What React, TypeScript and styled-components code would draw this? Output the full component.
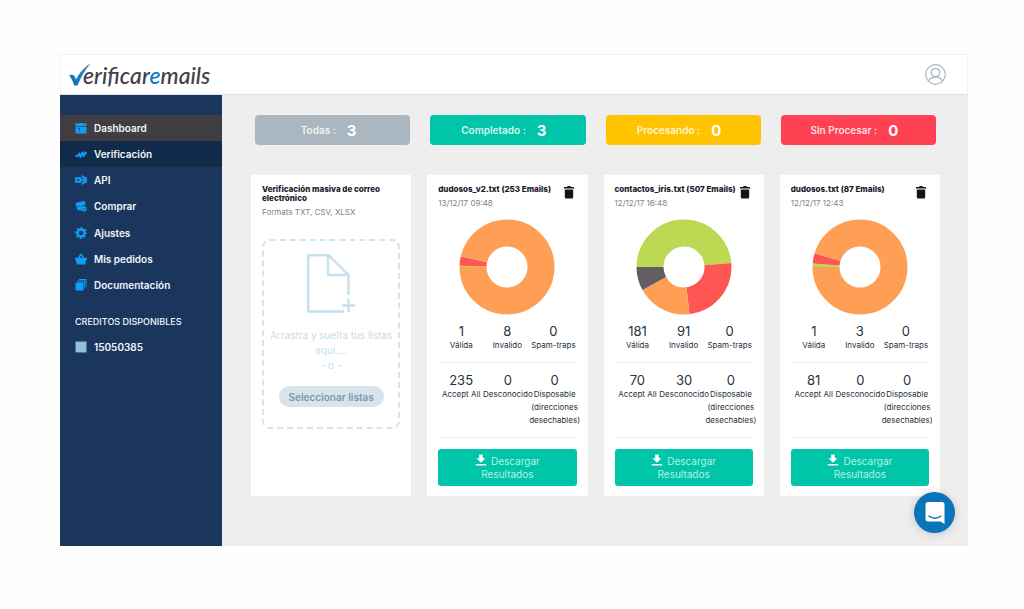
import React from "react";
import styled, { createGlobalStyle } from "styled-components";

const GlobalStyle = createGlobalStyle`
  *, *::before, *::after { box-sizing: border-box; }
  body {
    margin: 0;
    background: #fefefe;
    color: #253240;
    font-family: Inter, "Liberation Sans", sans-serif;
    font-size: 8px;
  }
  h2, p, ul, dl, dd { margin: 0; padding: 0; }
  ul { list-style: none; }
  button { font-family: inherit; cursor: pointer; border: 0; padding: 0; }
`;

const Page = styled.div`
  min-height: 100vh;
  padding: 54px 56px 63px 60px;
  display: flex;
`;

const Shell = styled.div`
  position: relative;
  flex: 1;
  min-width: 0;
  display: flex;
  flex-direction: column;
`;

const Header = styled.header`
  display: flex;
  align-items: center;
  justify-content: space-between;
  height: 41px;
  padding: 0 21px 0 8px;
  background: #fff;
  border: 1px solid #f1f1f1;
  border-bottom-color: #dbe2ea;
`;

const Brand = styled.a`
  display: flex;
  align-items: center;
  color: #414046;
  text-decoration: none;
  font-family: Lato, "Open Sans", sans-serif;
  font-style: italic;
  font-weight: 500;
  font-size: 23px;
  line-height: 24px;

  svg { margin-right: -8px; }
`;

const BrandAccent = styled.span`
  color: #0d7ac4;
`;

const IconButton = styled.button`
  display: flex;
  flex: none;
  background: none;
  color: ${(p) => p.color};
`;

const Body = styled.div`
  flex: 1;
  display: flex;
`;

const Sidebar = styled.aside`
  flex: none;
  width: 162px;
  padding-top: 20px;
  background: #1b365d;
`;

const NavList = styled.ul`
  display: grid;
  grid-auto-rows: 1fr;
  min-height: 183px;
`;

const NavLink = styled.a<{ $bg?: string }>`
  display: flex;
  align-items: center;
  gap: 7px;
  height: 100%;
  padding-left: 15px;
  background: ${(p) => p.$bg ?? "transparent"};
  color: #f1f5fa;
  font-size: 10px;
  font-weight: 600;
  text-decoration: none;

  svg { color: #0c9ef8; }
`;

const SideTitle = styled.h2`
  padding: 18px 0 0 15px;
  color: #f1f5fa;
  font-size: 9px;
  line-height: 12px;
  font-weight: 500;
`;

const Credits = styled.p`
  display: flex;
  align-items: center;
  gap: 7px;
  padding: 12px 0 0 15px;
  color: #f1f5fa;
  font-size: 10px;
  line-height: 14px;
  font-weight: 600;
`;

const Main = styled.main`
  flex: 1;
  min-width: 0;
  padding: 20px 28px 50px 29px;
  background: #eee;
`;

const Filters = styled.div`
  display: grid;
  grid-template-columns: repeat(4, 1fr);
  gap: 20px;
  padding: 0 4px;
`;

const Filter = styled.button<{ $bg: string }>`
  display: flex;
  align-items: center;
  justify-content: center;
  gap: 11px;
  height: 30px;
  padding-right: 8px;
  border-radius: 4px;
  background: ${(p) => p.$bg};
  color: rgba(255, 255, 255, 0.85);
  font-size: 10px;
  font-weight: 600;

  strong {
    color: #fff;
    font-size: 15px;
    font-weight: 700;
  }
`;

const Cards = styled.div`
  display: grid;
  grid-template-columns: repeat(4, 1fr);
  gap: 16px;
  margin-top: 30px;
`;

const Card = styled.section`
  display: flex;
  flex-direction: column;
  min-width: 0;
  padding: 10px 11px;
  background: #fff;
`;

const CardHead = styled.div`
  display: flex;
  justify-content: space-between;
  height: 34px;
  padding-right: 2px;
`;

const Title = styled.h2<{ $wrap?: boolean }>`
  color: #17202b;
  font-size: 8px;
  line-height: 9px;
  font-weight: 800;
  white-space: ${(p) => (p.$wrap ? "normal" : "nowrap")};
`;

const Sub = styled.p`
  margin-top: 4px;
  color: #7d8288;
  font-size: 8px;
  line-height: 10px;
`;

const DropZone = styled.div`
  display: flex;
  flex-direction: column;
  align-items: center;
  margin-top: 22px;
  height: 190px;
  padding-top: 12px;
  border: 2px dashed #d3e4f0;
  border-radius: 8px;
  color: #c6deec;
  font-size: 10px;
  line-height: 15px;
  text-align: center;

  p { margin-top: 15px; }
`;

const PickButton = styled.button`
  margin-top: 13px;
  height: 21px;
  padding: 0 10px;
  border-radius: 11px;
  background: #d7e4ec;
  color: #7f98a8;
  font-size: 10px;
  font-weight: 600;
`;

const Chart = styled.svg`
  display: block;
  align-self: center;
  width: 96px;
  height: 96px;
`;

const Stats = styled.dl<{ $columns: string }>`
  display: grid;
  grid-template-columns: ${(p) => p.$columns};
  border-bottom: 1px solid #ececec;
`;

const TopStats = styled(Stats)`
  padding: 8px 0 10px;
`;

const BottomStats = styled(Stats)`
  padding: 9px 0 10px 1px;
`;

const Stat = styled.div`
  display: flex;
  flex-direction: column-reverse;
  justify-content: flex-end;
  align-items: center;
  min-width: 0;

  dt {
    font-size: 8px;
    line-height: 13px;
    text-align: center;
    white-space: pre;
  }
  dd {
    font-size: 13px;
    line-height: 16px;
  }
`;

const Download = styled.button`
  margin-top: 11px;
  min-height: 37px;
  padding: 0 30px;
  border-radius: 3px;
  background: #00c5a9;
  color: #b4f1e6;
  font-size: 10px;
  line-height: 13px;

  svg {
    margin-right: 4px;
    vertical-align: -1px;
    color: #fff;
  }
`;

const ChatButton = styled.button`
  position: absolute;
  right: 13px;
  bottom: 13px;
  display: flex;
  align-items: center;
  justify-content: center;
  width: 41px;
  height: 41px;
  border-radius: 50%;
  background: #0a74bb;
  box-shadow: 0 1px 10px rgba(0, 0, 0, 0.18);
`;

const icons: Record<string, React.ReactNode> = {
  dashboard: (
    <>
      <path d="M.5 1h2v1h1V1h5v1h1V1h2v3.300H.5z" />
      <path d="M.5 5h11v6.500H.5z" />
      <path d="M3 6.500h1.500V8M4 9.300h.8" stroke="#1b365d" strokeWidth=".8" fill="none" />
    </>
  ),
  pulse: (
    <path
      d="M.5 8h2l1.700-2.500L5.500 9l2-4.500L8.800 8l1.400-3.500L11.500 6"
      fill="none"
      stroke="currentColor"
      strokeWidth="2"
      strokeLinejoin="round"
    />
  ),
  api: (
    <>
      <path d="M0 3.300h6.500v5.400H0zM1.600 5.300v1.400h2.800V5.300z" fillRule="evenodd" />
      <path
        d="M6 6h5M7 1.500 9.500 5M7 10.500 9.500 7M9 3l2.500 1.500v3L9 9"
        fill="none"
        stroke="currentColor"
        strokeWidth="1.700"
      />
    </>
  ),
  buy: (
    <>
      <path d="M.5 3 9.500.8l1.200 4-9 2.200z" />
      <path d="M1.500 7.300 7 6l-.8 4.500-3.700-.5z" />
      <circle cx="9" cy="8.700" r="2.700" />
      <path d="m7.700 8.700 1 1 1.700-1.800" fill="none" stroke="#1b365d" strokeWidth=".8" />
    </>
  ),
  gear: (
    <>
      <circle cx="6" cy="6" r="3.500" fill="none" stroke="currentColor" strokeWidth="2.400" />
      <circle
        cx="6"
        cy="6"
        r="5"
        fill="none"
        stroke="currentColor"
        strokeWidth="1.800"
        strokeDasharray="2.100 1.827"
        strokeDashoffset="1"
      />
    </>
  ),
  basket: (
    <>
      <path d="M0 4.800h12v2h-.7L10.300 11.500H1.700L.7 6.800H0z" />
      <path d="M2.500 5.300 5.300.8h1.400l2.800 4.500H8L6 2.500 4.200 5.300z" />
    </>
  ),
  docs: (
    <>
      <path d="M4 0h7.500v7.500h-1V1H4z" />
      <path d="M2.300 1.600h7.600v7.800H9V2.500H2.300z" />
      <path d="M2 3.200h6.500v8.300H.5V4.700z" />
    </>
  ),
};

function NavIcon({ name }: { name: string }) {
  return (
    <svg width="12" height="12" viewBox="0 0 12 12" fill="currentColor" aria-hidden="true">
      {icons[name]}
    </svg>
  );
}

const nav = [
  { label: "Dashboard", icon: "dashboard", bg: "#403e43" },
  { label: "Verificación", icon: "pulse", bg: "#122b4a" },
  { label: "API", icon: "api" },
  { label: "Comprar", icon: "buy" },
  { label: "Ajustes", icon: "gear" },
  { label: "Mis pedidos", icon: "basket" },
  { label: "Documentación", icon: "docs" },
];

const filters = [
  { label: "Todas :", count: 3, bg: "#abb7c0" },
  { label: "Completado :", count: 3, bg: "#00c5a9" },
  { label: "Procesando :", count: 0, bg: "#ffc400" },
  { label: "Sin Procesar :", count: 0, bg: "#ff4154" },
];

type Result = {
  name: string;
  emails: number;
  date: string;
  valid: number;
  invalid: number;
  traps: number;
  acceptAll: number;
  unknown: number;
  disposable: number;
};

const results: Result[] = [
  { name: "dudosos_v2.txt", emails: 253, date: "13/12/17 09:48", valid: 1, invalid: 8, traps: 0, acceptAll: 235, unknown: 0, disposable: 0 },
  { name: "contactos_iris.txt", emails: 507, date: "12/12/17 16:48", valid: 181, invalid: 91, traps: 0, acceptAll: 70, unknown: 30, disposable: 0 },
  { name: "dudosos.txt", emails: 87, date: "12/12/17 12:43", valid: 1, invalid: 3, traps: 0, acceptAll: 81, unknown: 0, disposable: 0 },
];

function Donut({ result }: { result: Result }) {
  const slices = [
    { value: result.valid, color: "#bdd954" },
    { value: result.invalid, color: "#ff5654" },
    { value: result.acceptAll, color: "#ff9f55" },
    { value: result.unknown, color: "#615d62" },
  ];
  const total = slices.reduce((sum, s) => sum + s.value, 0);
  let start = 0;
  return (
    <Chart viewBox="0 0 96 96" role="img" aria-label={`Resultados de ${result.name}`}>
      {slices.map((s) => {
        const share = (s.value / total) * 100;
        const offset = -start;
        start += share;
        return share > 0 ? (
          <circle
            key={s.color}
            cx="48"
            cy="48"
            r="34"
            fill="none"
            stroke={s.color}
            strokeWidth="27"
            pathLength={100}
            strokeDasharray={`${share} ${100 - share}`}
            strokeDashoffset={offset}
            transform="rotate(180 48 48)"
          />
        ) : null;
      })}
    </Chart>
  );
}

function StatItem({ label, value }: { label: string; value: number }) {
  return (
    <Stat>
      <dt>{label}</dt>
      <dd>{value}</dd>
    </Stat>
  );
}

function ResultCard({ result }: { result: Result }) {
  return (
    <Card>
      <CardHead>
        <div>
          <Title>{`${result.name} (${result.emails} Emails)`}</Title>
          <Sub>{result.date}</Sub>
        </div>
        <IconButton color="#14161c" aria-label={`Eliminar ${result.name}`}>
          <svg width="12" height="14" viewBox="0 0 12 14" fill="currentColor">
            <path d="M1 2h3l.7-1h2.600L8 2h3v1.500H1zM1.800 4.500h8.400V12q0 1.500-1.500 1.500H3.300q-1.500 0-1.500-1.500z" />
          </svg>
        </IconButton>
      </CardHead>
      <Donut result={result} />
      <TopStats $columns="repeat(3, minmax(0, 1fr))">
        <StatItem label="Válida" value={result.valid} />
        <StatItem label="Invalido" value={result.invalid} />
        <StatItem label="Spam-traps" value={result.traps} />
      </TopStats>
      <BottomStats $columns="minmax(0, 1fr) max-content minmax(0, 1fr)">
        <StatItem label="Accept All" value={result.acceptAll} />
        <StatItem label="Desconocido" value={result.unknown} />
        <StatItem label={"Disposable\n(direcciones\ndesechables)"} value={result.disposable} />
      </BottomStats>
      <Download>
        <svg width="12" height="12" viewBox="0 0 12 12" fill="currentColor" aria-hidden="true">
          <path d="M4.200.5h3.600v3.800h2.700L6 8.700 1.500 4.300h2.700zM.8 10h10.400v1.500H.8z" />
        </svg>
        Descargar Resultados
      </Download>
    </Card>
  );
}

export default function App() {
  return (
    <>
      <GlobalStyle />
      <Page>
        <Shell>
          <Header>
            <Brand href="#">
              <svg width="22" height="24" viewBox="0 0 22 24" aria-hidden="true">
                <defs>
                  <linearGradient id="check" x1="0" y1="1" x2="1" y2="0">
                    <stop offset="0" stopColor="#0b6cb8" />
                    <stop offset=".5" stopColor="#1784cc" />
                    <stop offset="1" stopColor="#5f7f9c" />
                  </linearGradient>
                </defs>
                <path d="M0 12.500c2.500-1.500 5-1 6 1.500l1 2.500C10 10.500 15 4.500 21.500.5 16 7 12 14 8.500 22.500H5C4 18.500 2.500 15 0 12.500z" fill="url(#check)" />
              </svg>
              <span>
                erificar<BrandAccent>e</BrandAccent>mails
              </span>
            </Brand>
            <IconButton color="#a9b6c3" aria-label="Mi cuenta">
              <svg width="21" height="21" viewBox="0 0 21 21" fill="none" stroke="currentColor" strokeWidth="1.200">
                <circle cx="10.500" cy="10.500" r="9.800" />
                <circle cx="10.500" cy="8.500" r="4.200" />
                <path d="M3.500 17.200c1-2.700 3.800-4 7-4s6 1.300 7 4" />
              </svg>
            </IconButton>
          </Header>
          <Body>
            <Sidebar>
              <nav aria-label="Principal">
                <NavList>
                  {nav.map((n) => (
                    <li key={n.label}>
                      <NavLink href="#" $bg={n.bg}>
                        <NavIcon name={n.icon} />
                        {n.label}
                      </NavLink>
                    </li>
                  ))}
                </NavList>
              </nav>
              <SideTitle>CREDITOS DISPONIBLES</SideTitle>
              <Credits>
                <svg width="12" height="12" viewBox="0 0 12 12" aria-hidden="true">
                  <path d="M.5.5h11v11H.5z" fill="#86b9d3" />
                  <path
                    d="M2 2.500h8M2 4.500h8M2 6.500h8M2 8.500h8M2 10.200h8"
                    stroke="#b9d9e4"
                    strokeWidth="1"
                    strokeDasharray="1 1.300"
                  />
                </svg>
                15050385
              </Credits>
            </Sidebar>
            <Main>
              <Filters>
                {filters.map((f) => (
                  <Filter key={f.label} $bg={f.bg}>
                    {f.label}
                    <strong>{f.count}</strong>
                  </Filter>
                ))}
              </Filters>
              <Cards>
                <Card>
                  <Title $wrap>Verificación masiva de correo electrónico</Title>
                  <Sub>Formats TXT, CSV, XLSX</Sub>
                  <DropZone>
                    <svg width="50" height="60" viewBox="0 0 50 60" fill="none" stroke="#c8e0ee" strokeWidth="2.400" aria-hidden="true">
                      <path d="M38 58.500H2.300V2.300h20.500L42.500 22v20M22 2.300V22h20.500" />
                      <path d="M42.500 46v13M36 52.500h13" />
                    </svg>
                    <p>
                      Arrastra y suelta tus listas aquí....
                      <br />- o -
                    </p>
                    <PickButton>Seleccionar listas</PickButton>
                  </DropZone>
                </Card>
                {results.map((r) => (
                  <ResultCard key={r.name} result={r} />
                ))}
              </Cards>
            </Main>
          </Body>
          <ChatButton aria-label="Abrir chat">
            <svg width="20" height="22" viewBox="0 0 20 22" aria-hidden="true">
              <path d="M3 0h14q2.500 0 2.500 2.500V22l-4-2.500H3Q.5 19.500.5 17V2.500Q.5 0 3 0z" fill="#fff" />
              <path d="M4 14.200q6 4 12 0" fill="none" stroke="#0a74bb" strokeWidth="1.400" strokeLinecap="round" />
            </svg>
          </ChatButton>
        </Shell>
      </Page>
    </>
  );
}
